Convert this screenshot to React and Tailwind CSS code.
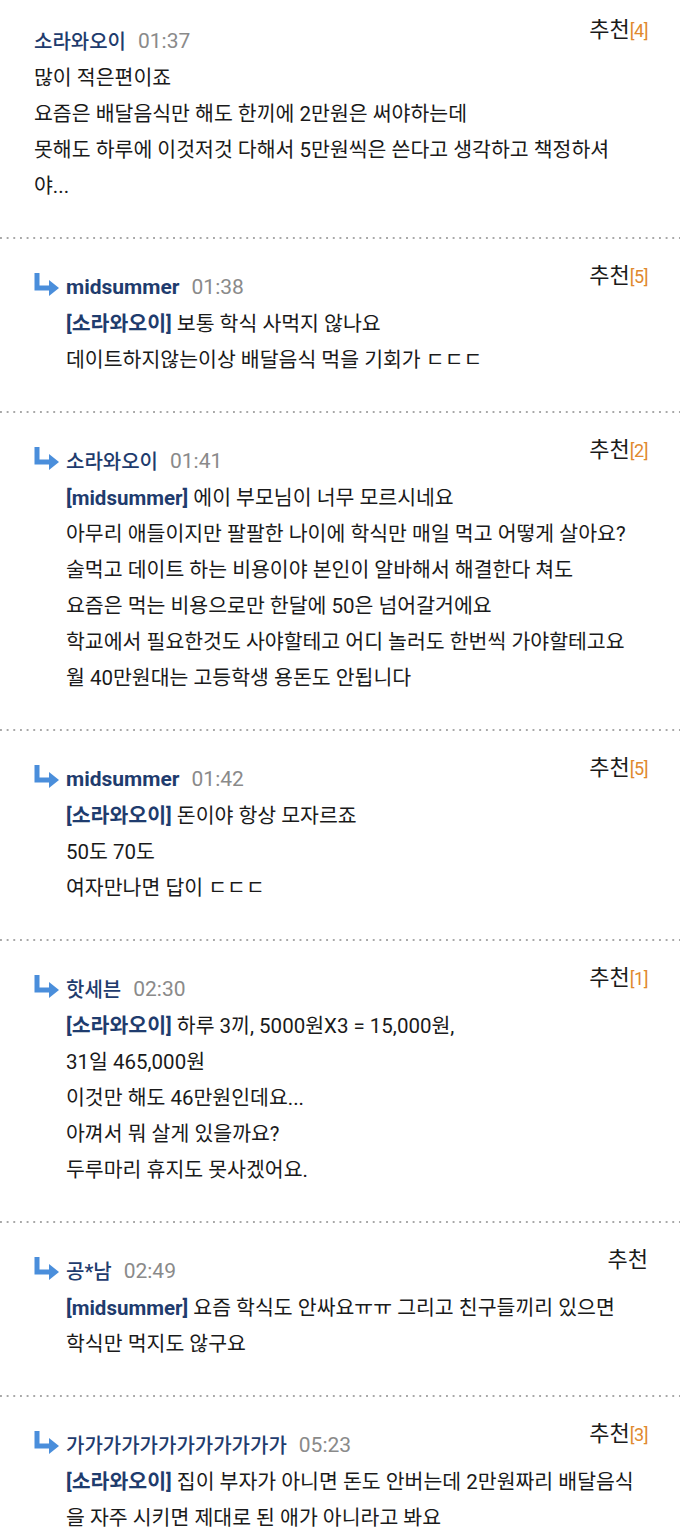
import React from "react";

const comments = [
    {
        name: "소라와오이",
        time: "01:37",
        likes: 4,
        reply: false,
        lines: [
            "많이 적은편이죠",
            "요즘은 배달음식만 해도 한끼에 2만원은 써야하는데",
            "못해도 하루에 이것저것 다해서 5만원씩은 쓴다고 생각하고 책정하셔",
            "야...",
        ],
    },
    {
        name: "midsummer",
        time: "01:38",
        likes: 5,
        reply: true,
        to: "소라와오이",
        lines: ["보통 학식 사먹지 않나요", "데이트하지않는이상 배달음식 먹을 기회가 ㄷㄷㄷ"],
    },
    {
        name: "소라와오이",
        time: "01:41",
        likes: 2,
        reply: true,
        to: "midsummer",
        lines: [
            "에이 부모님이 너무 모르시네요",
            "아무리 애들이지만 팔팔한 나이에 학식만 매일 먹고 어떻게 살아요?",
            "술먹고 데이트 하는 비용이야 본인이 알바해서 해결한다 쳐도",
            "요즘은 먹는 비용으로만 한달에 50은 넘어갈거에요",
            "학교에서 필요한것도 사야할테고 어디 놀러도 한번씩 가야할테고요",
            "월 40만원대는 고등학생 용돈도 안됩니다",
        ],
    },
    {
        name: "midsummer",
        time: "01:42",
        likes: 5,
        reply: true,
        to: "소라와오이",
        lines: ["돈이야 항상 모자르죠", "50도 70도", "여자만나면 답이 ㄷㄷㄷ"],
    },
    {
        name: "핫세븐",
        time: "02:30",
        likes: 1,
        reply: true,
        to: "소라와오이",
        lines: [
            "하루 3끼, 5000원X3 = 15,000원,",
            "31일 465,000원",
            "이것만 해도 46만원인데요...",
            "아껴서 뭐 살게 있을까요?",
            "두루마리 휴지도 못사겠어요.",
        ],
    },
    {
        name: "공*남",
        time: "02:49",
        likes: 0,
        reply: true,
        to: "midsummer",
        lines: ["요즘 학식도 안싸요ㅠㅠ 그리고 친구들끼리 있으면", "학식만 먹지도 않구요"],
    },
    {
        name: "가가가가가가가가가가가가",
        time: "05:23",
        likes: 3,
        reply: true,
        to: "소라와오이",
        lines: ["집이 부자가 아니면 돈도 안버는데 2만원짜리 배달음식", "을 자주 시키면 제대로 된 애가 아니라고 봐요"],
    },
];

function ReplyArrow() {
    return (
        <svg width="26" height="24" viewBox="0 0 26 24" className="shrink-0 mr-[6px] mt-[-6px]">
            <path d="M3 0 V15 H16" fill="none" stroke="#4a8edb" strokeWidth="5" />
            <path d="M15 7 L25 15 L15 23 Z" fill="#4a8edb" />
        </svg>
    );
}

function Separator() {
    return (
        <div className="h-[2px] w-full bg-[linear-gradient(to_right,#a8a8a8_2px,transparent_2px)] bg-[length:6.67px_2px]" />
    );
}

function Comment({ c }) {
    return (
        <div className={c.reply ? "pt-[31px] pb-[33px] pl-[34px] pr-[32px]" : "pt-[24px] pb-[33px] pl-[34px] pr-[32px]"}>
            <div className="flex items-start justify-between">
                <div className="flex items-center h-[36px]">
                    {c.reply && <ReplyArrow />}
                    <span
                        className={
                            c.name === "midsummer"
                                ? "text-[21px] font-bold text-[#1f3c6e]"
                                : "text-[20px] font-medium text-[#1f3c6e]"
                        }
                    >
                        {c.name}
                    </span>
                    <span className="ml-[12px] text-[21px] text-[#8a8a8a]">{c.time}</span>
                </div>
                <div className="-mt-[6px] leading-[24px] flex items-baseline">
                    <span className="text-[22px] text-[#1a1a1a]">추천</span>
                    {c.likes > 0 && (
                        <span className="text-[18px] text-[#e0892e] tracking-[-0.5px]">[{c.likes}]</span>
                    )}
                </div>
            </div>
            <div className={c.reply ? "pl-[32px]" : ""}>
                {c.lines.map((line, i) => (
                    <div key={i} className="h-[36px] leading-[36px] text-[20.5px] text-[#1a1a1a] whitespace-nowrap">
                        {i === 0 && c.to && (
                            <span className="font-bold text-[#1f3c6e]">[{c.to}] </span>
                        )}
                        {line}
                    </div>
                ))}
            </div>
        </div>
    );
}

export default function App() {
    return (
        <div className="w-[680px] h-[1537px] overflow-hidden bg-white font-['Roboto','Noto_Sans_CJK_KR',sans-serif]">
            {comments.map((c, i) => (
                <div key={i}>
                    {i > 0 && <Separator />}
                    <Comment c={c} />
                </div>
            ))}
        </div>
    );
}
